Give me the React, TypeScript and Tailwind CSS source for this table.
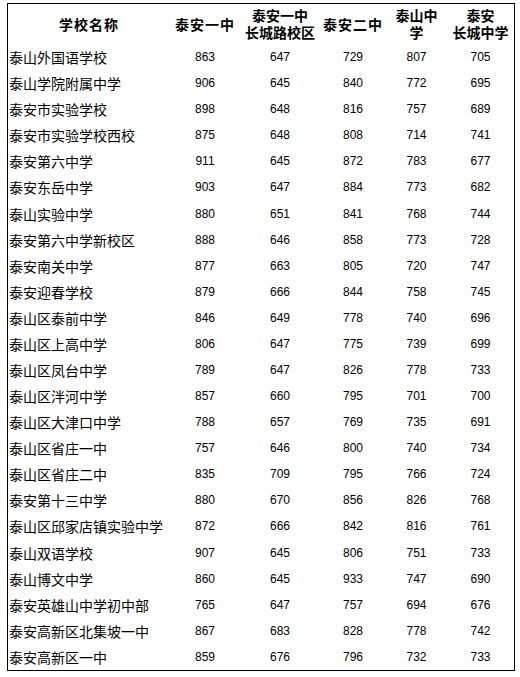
const rows: [string, number, number, number, number, number][] = [
  ["泰山外国语学校", 863, 647, 729, 807, 705],
  ["泰山学院附属中学", 906, 645, 840, 772, 695],
  ["泰安市实验学校", 898, 648, 816, 757, 689],
  ["泰安市实验学校西校", 875, 648, 808, 714, 741],
  ["泰安第六中学", 911, 645, 872, 783, 677],
  ["泰安东岳中学", 903, 647, 884, 773, 682],
  ["泰山实验中学", 880, 651, 841, 768, 744],
  ["泰安第六中学新校区", 888, 646, 858, 773, 728],
  ["泰安南关中学", 877, 663, 805, 720, 747],
  ["泰安迎春学校", 879, 666, 844, 758, 745],
  ["泰山区泰前中学", 846, 649, 778, 740, 696],
  ["泰山区上高中学", 806, 647, 775, 739, 699],
  ["泰山区凤台中学", 789, 647, 826, 778, 733],
  ["泰山区泮河中学", 857, 660, 795, 701, 700],
  ["泰山区大津口中学", 788, 657, 769, 735, 691],
  ["泰山区省庄一中", 757, 646, 800, 740, 734],
  ["泰山区省庄二中", 835, 709, 795, 766, 724],
  ["泰安第十三中学", 880, 670, 856, 826, 768],
  ["泰山区邱家店镇实验中学", 872, 666, 842, 816, 761],
  ["泰山双语学校", 907, 645, 806, 751, 733],
  ["泰山博文中学", 860, 645, 933, 747, 690],
  ["泰安英雄山中学初中部", 765, 647, 757, 694, 676],
  ["泰安高新区北集坡一中", 867, 683, 828, 778, 742],
  ["泰安高新区一中", 859, 676, 796, 732, 733],
];

const cols = "grid grid-cols-[162px_70px_80px_66px_61px_67px]";
const cjk = "font-['Noto_Sans_CJK_SC','Noto_Sans',sans-serif]";

function TwoLines({ top, bottom }: { top: string; bottom: string }) {
  return (
    <div className="flex flex-col items-center">
      <span className="block h-[17px] leading-[17px]">{top}</span>
      <span className="block h-[17px] leading-[17px]">{bottom}</span>
    </div>
  );
}

export default function App() {
  return (
    <div className="min-h-[677px] w-[520px] bg-white pl-[7px] pt-[3px] text-black">
      <div className="w-[508px] border border-black">
        <div className={`${cols} h-[40px] items-center text-center text-[14px] font-bold ${cjk}`}>
          <div className="tracking-[1px]">学校名称</div>
          <div className="tracking-[1px]">泰安一中</div>
          <TwoLines top="泰安一中" bottom="长城路校区" />
          <div className="tracking-[1px]">泰安二中</div>
          <TwoLines top="泰山中" bottom="学" />
          <TwoLines top="泰安" bottom="长城中学" />
        </div>
        {rows.map(([name, a, b, c, d, e]) => (
          <div key={name} className={`${cols} h-[26.08px] items-center`}>
            <div className={`pl-px text-[14px] leading-none ${cjk}`}>{name}</div>
            {[a, b, c, d, e].map((n, i) => (
              <div key={i} className="text-center font-['Liberation_Sans',sans-serif] text-[12px] leading-none">
                {n}
              </div>
            ))}
          </div>
        ))}
      </div>
    </div>
  );
}
